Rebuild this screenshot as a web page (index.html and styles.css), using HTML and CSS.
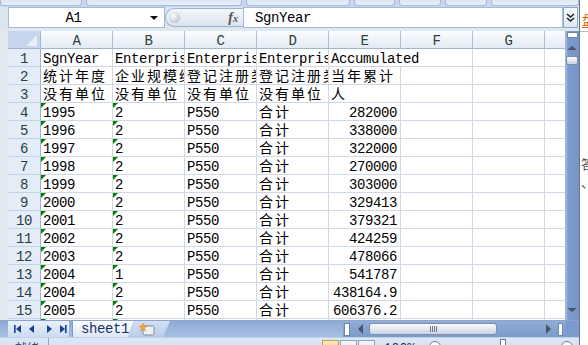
FILE: index.html
```html
<!DOCTYPE html>
<html>
<head>
<meta charset="utf-8">
<link rel="stylesheet" href="styles.css">
</head>
<body>
<div class="app">
  <div class="excel">
    <div class="ribbon">
      <div class="rgroup w82"></div>
      <div class="rgroup w157"></div>
      <div class="rgroup w105"></div>
      <div class="rgroup w41"></div>
      <div class="rgroup w42"></div>
      <div class="rgroup w42"></div>
      <div class="rgroup w88"></div>
    </div>
    <div class="fbar">
      <div class="namebox"><span class="nbtext">A1</span><span class="nbarrow"></span></div>
      <div class="fxpill"><span class="knob"></span><span class="fx">f<small>x</small></span></div>
      <div class="finput">SgnYear</div>
      <div class="expand"><svg width="9" height="10" viewBox="0 0 9 10"><path d="M1 1 L4.5 4 L8 1 M1 5 L4.5 8 L8 5" fill="none" stroke="#222" stroke-width="1.6"/></svg></div>
    </div>
    <div class="fgap"></div>
    <div class="sheet">
      <div class="grid">
        <div class="corner"></div><div class="ch">A</div><div class="ch">B</div><div class="ch">C</div><div class="ch">D</div><div class="ch">E</div><div class="ch">F</div><div class="ch">G</div><div class="ch"></div>

        <div class="rh">1</div><div class="c">SgnYear</div><div class="c">EnterpriseScale</div><div class="c">EnterpriseRegType</div><div class="c">EnterpriseRegType</div><div class="c span2">Accumulated</div><div class="c"></div><div class="c"></div>

        <div class="rh">2</div><div class="c k">统计年度</div><div class="c k">企业规模维度</div><div class="c k">登记注册类型</div><div class="c k">登记注册类型</div><div class="c k">当年累计</div><div class="c"></div><div class="c"></div><div class="c"></div>

        <div class="rh">3</div><div class="c k">没有单位</div><div class="c k">没有单位</div><div class="c k">没有单位</div><div class="c k">没有单位</div><div class="c k">人</div><div class="c"></div><div class="c"></div><div class="c"></div>

        <div class="rh">4</div><div class="c t">1995</div><div class="c t">2</div><div class="c">P550</div><div class="c k">合计</div><div class="c n">282000</div><div class="c"></div><div class="c"></div><div class="c"></div>
        <div class="rh">5</div><div class="c t">1996</div><div class="c t">2</div><div class="c">P550</div><div class="c k">合计</div><div class="c n">338000</div><div class="c"></div><div class="c"></div><div class="c"></div>
        <div class="rh">6</div><div class="c t">1997</div><div class="c t">2</div><div class="c">P550</div><div class="c k">合计</div><div class="c n">322000</div><div class="c"></div><div class="c"></div><div class="c"></div>
        <div class="rh">7</div><div class="c t">1998</div><div class="c t">2</div><div class="c">P550</div><div class="c k">合计</div><div class="c n">270000</div><div class="c"></div><div class="c"></div><div class="c"></div>
        <div class="rh">8</div><div class="c t">1999</div><div class="c t">2</div><div class="c">P550</div><div class="c k">合计</div><div class="c n">303000</div><div class="c"></div><div class="c"></div><div class="c"></div>
        <div class="rh">9</div><div class="c t">2000</div><div class="c t">2</div><div class="c">P550</div><div class="c k">合计</div><div class="c n">329413</div><div class="c"></div><div class="c"></div><div class="c"></div>
        <div class="rh">10</div><div class="c t">2001</div><div class="c t">2</div><div class="c">P550</div><div class="c k">合计</div><div class="c n">379321</div><div class="c"></div><div class="c"></div><div class="c"></div>
        <div class="rh">11</div><div class="c t">2002</div><div class="c t">2</div><div class="c">P550</div><div class="c k">合计</div><div class="c n">424259</div><div class="c"></div><div class="c"></div><div class="c"></div>
        <div class="rh">12</div><div class="c t">2003</div><div class="c t">2</div><div class="c">P550</div><div class="c k">合计</div><div class="c n">478066</div><div class="c"></div><div class="c"></div><div class="c"></div>
        <div class="rh">13</div><div class="c t">2004</div><div class="c t">1</div><div class="c">P550</div><div class="c k">合计</div><div class="c n">541787</div><div class="c"></div><div class="c"></div><div class="c"></div>
        <div class="rh">14</div><div class="c t">2004</div><div class="c t">2</div><div class="c">P550</div><div class="c k">合计</div><div class="c n">438164.9</div><div class="c"></div><div class="c"></div><div class="c"></div>
        <div class="rh">15</div><div class="c t">2005</div><div class="c t">2</div><div class="c">P550</div><div class="c k">合计</div><div class="c n">606376.2</div><div class="c"></div><div class="c"></div><div class="c"></div>
        <div class="rh">16</div><div class="c t"></div><div class="c t"></div><div class="c"></div><div class="c"></div><div class="c"></div><div class="c"></div><div class="c"></div><div class="c"></div>
      </div>
      <div class="vscroll">
        <div class="splitv"></div>
        <div class="arrow-up"></div>
        <div class="vthumb"></div>
        <div class="vfill"></div>
        <div class="arrow-down"></div>
      </div>
    </div>
    <div class="tabbar">
      <div class="nav">
        <svg width="56" height="12" viewBox="0 0 56 12">
          <g fill="#15428b">
            <rect x="3" y="2" width="1.6" height="8"/><path d="M5 6 L10 2 L10 10 Z"/>
            <path d="M18 6 L23 2 L23 10 Z"/>
            <path d="M36 2 L41 6 L36 10 Z"/>
            <path d="M49 2 L54 6 L49 10 Z"/><rect x="54" y="2" width="1.6" height="8"/>
          </g>
        </svg>
      </div>
      <div class="tab">sheet1</div>
      <div class="newtab">
        <svg width="18" height="14" viewBox="0 0 18 14">
          <rect x="5" y="4" width="11" height="9" rx="1.5" fill="#eef2f7" stroke="#7a8799"/>
          <path d="M5 1 L6 4 L9 4 L6.5 6 L7.5 9 L5 7 L2.5 9 L3.5 6 L1 4 L4 4 Z" fill="#f5a623" stroke="#d9822b" stroke-width="0.5"/>
        </svg>
      </div>
      <div class="tabfill"></div>
      <div class="hscroll">
        <div class="splith"></div>
        <div class="arrow-left"></div>
        <div class="hthumb"><span class="grip"></span></div>
        <div class="hfill"></div>
        <div class="arrow-right"></div>
        <div class="splith2"></div>
      </div>
      <div class="sbcorner"></div>
    </div>
    <div class="status">
      <div class="ready">就绪</div>
      <div class="sep"></div>
      <div class="stfill"></div>
      <div class="views"><span class="vb on"></span><span class="vb"></span><span class="vb"></span></div>
      <div class="zoomtxt">100%</div>
      <div class="zbtn"></div>
      <div class="ztrack"><span class="zmark"></span></div>
      <div class="zbtn"></div>
    </div>
  </div>
  <div class="edge"></div>
  <div class="side">
    <div class="sidetop">盘</div>
    <div class="sideline"></div>
    <div class="sidetext">答</div>
    <div class="sidetext s2">、</div>
  </div>
</div>
</body>
</html>
```

FILE: styles.css
```css
html, body {
  margin: 0;
  padding: 0;
  width: 588px;
  height: 345px;
  overflow: hidden;
  background: #dfe6ef;
}

.app {
  display: flex;
  height: 345px;
  overflow: hidden;
}

.excel {
  width: 579px;
  flex: none;
  display: flex;
  flex-direction: column;
  background: #dfe7f1;
  overflow: hidden;
}

.excel > * {
  flex: none;
}

.edge {
  width: 1px;
  flex: none;
  background: #6c7480;
}

.side {
  width: 8px;
  flex: none;
  background: #ffffff;
  overflow: hidden;
  font-family: "Noto Sans CJK SC", sans-serif;
}

.sidetop {
  margin: 11px 0 0 2px;
  font-size: 14px;
  line-height: 16px;
  color: #e0620d;
  border-bottom: 1px solid #e0620d;
  width: 20px;
  white-space: nowrap;
}

.sideline {
  margin-top: 3px;
  height: 1px;
  background: #b8b8b8;
}

.sidetext {
  margin: 124px 0 0 1px;
  width: 20px;
  font-size: 13px;
  line-height: 16px;
  color: #444;
  white-space: nowrap;
}

.sidetext.s2 {
  margin-top: 2px;
}

/* ribbon remains */
.ribbon {
  height: 7px;
  display: flex;
  gap: 4px;
  background: #c6d7ee;
  overflow: hidden;
}

.rgroup {
  height: 5px;
  background: linear-gradient(#dbe7f6, #e9f0fa);
  border: 1px solid #a5bbd8;
  border-top: none;
  border-radius: 0 0 4px 4px;
}

.w82 { width: 80px; }
.w157 { width: 154px; }
.w105 { width: 102px; }
.w41 { width: 39px; }
.w42 { width: 40px; }
.w88 { width: 86px; }

/* formula bar */
.fbar {
  height: 21px;
  display: flex;
  padding-left: 8px;
  background: #dbe5f2;
  font-family: "Liberation Mono", monospace;
  font-size: 14px;
  letter-spacing: -0.4px;
}

.namebox {
  width: 157px;
  box-sizing: border-box;
  background: #fff;
  border: 1px solid #a7bad4;
  display: flex;
  align-items: center;
}

.nbtext {
  flex: 1;
  text-align: center;
  padding-right: 12px;
  line-height: 19px;
  padding-top: 1px;
}

.nbarrow {
  width: 0;
  height: 0;
  border-left: 4px solid transparent;
  border-right: 4px solid transparent;
  border-top: 4px solid #111;
  margin-right: 6px;
}

.fxpill {
  width: 78px;
  box-sizing: border-box;
  margin: 1px 0;
  display: flex;
  align-items: center;
  justify-content: space-between;
  background: linear-gradient(#f4f7fb, #dbe3ef);
  border: 1px solid #9fb2cc;
  border-right: none;
  border-radius: 10px 0 0 10px;
  padding: 0 5px 0 3px;
}

.knob {
  width: 11px;
  height: 11px;
  border-radius: 50%;
  background: radial-gradient(circle at 40% 35%, #ffffff, #c3c9d2 70%, #9aa3ae);
}

.fx {
  font-family: "Liberation Serif", serif;
  font-style: italic;
  font-weight: bold;
  font-size: 14px;
  color: #555;
  letter-spacing: 0;
}

.fx small {
  font-size: 10px;
}

.finput {
  width: 320px;
  box-sizing: border-box;
  background: #fff;
  border: 1px solid #a7bad4;
  padding: 1px 0 0 11px;
  line-height: 19px;
  color: #000;
}

.expand {
  width: 15px;
  box-sizing: border-box;
  background: linear-gradient(#f8fbff, #dde7f4);
  border: 1px solid #8ea8cc;
  display: flex;
  align-items: center;
  justify-content: center;
}

.fgap {
  height: 3px;
  background: #dfe7f1;
}

/* sheet */
.sheet {
  height: 289px;
  display: flex;
  padding-left: 8px;
  background: #e3e9f1;
}

.grid {
  width: 557px;
  height: 289px;
  overflow: hidden;
  display: grid;
  grid-template-columns: 33px repeat(7, 72px) 21px;
  grid-auto-rows: 18px;
  background: #fff;
  font-family: "Liberation Mono", monospace;
  font-size: 14px;
  letter-spacing: -0.4px;
}

.corner {
  position: relative;
  background: #c5d6ec;
  border-right: 1px solid #9eb6ce;
  border-bottom: 1px solid #9eb6ce;
}

.corner::after {
  content: "";
  position: absolute;
  right: 3px;
  bottom: 2px;
  width: 0;
  height: 0;
  border-left: 11px solid transparent;
  border-bottom: 11px solid #e8eef6;
}

.ch {
  box-sizing: border-box;
  background: linear-gradient(#fbfcfe, #e3eaf4);
  border-right: 1px solid #a9bfd6;
  border-bottom: 1px solid #9eb6ce;
  text-align: center;
  color: #27413e;
  line-height: 18px;
  padding-top: 1px;
}

.rh {
  box-sizing: border-box;
  background: #e4ecf7;
  border-right: 1px solid #9eb6ce;
  border-bottom: 1px solid #c5d3e6;
  text-align: center;
  color: #27413e;
  line-height: 20px;
  overflow: hidden;
}

.c {
  box-sizing: border-box;
  position: relative;
  border-right: 1px solid #d0d7e5;
  border-bottom: 1px solid #d0d7e5;
  padding: 0 2px;
  overflow: hidden;
  white-space: nowrap;
  line-height: 20px;
  color: #000;
}

.c.span2 {
  grid-column: span 2;
}

.c.k {
  font-family: "Noto Sans CJK SC", sans-serif;
  font-size: 14px;
  letter-spacing: 2px;
  line-height: 16px;
}

.c.n {
  text-align: right;
  padding-right: 3px;
}

.c.t::before {
  content: "";
  position: absolute;
  left: 0;
  top: 0;
  width: 0;
  height: 0;
  border-top: 5px solid #008000;
  border-right: 5px solid transparent;
}

/* vertical scrollbar */
.vscroll {
  width: 14px;
  display: flex;
  flex-direction: column;
  align-items: center;
  background: linear-gradient(to right, #a6bee0, #7b9bcc 25%, #7596c8);
}

.splitv {
  margin-top: 1px;
  width: 11px;
  height: 6px;
  box-sizing: border-box;
  border: 1px solid #6c85a8;
  border-radius: 1px;
  background: linear-gradient(#ffffff 40%, #5b6f8c 45%, #5b6f8c 55%, #ffffff 60%);
}

.arrow-up {
  margin-top: 8px;
  width: 0;
  height: 0;
  border-left: 5px solid transparent;
  border-right: 5px solid transparent;
  border-bottom: 4px solid #4b5563;
}

.vthumb {
  margin-top: 6px;
  width: 12px;
  height: 9px;
  box-sizing: border-box;
  border: 1px solid #7d8ea6;
  border-radius: 2px;
  background: linear-gradient(#fbfcfe, #c8d3e2);
}

.vfill {
  flex: 1;
}

.arrow-down {
  margin-bottom: 8px;
  width: 0;
  height: 0;
  border-left: 5px solid transparent;
  border-right: 5px solid transparent;
  border-top: 4px solid #4b5563;
}

/* tab bar */
.tabbar {
  height: 17px;
  display: flex;
  padding-left: 8px;
  background: linear-gradient(#8faad3, #a7bfe2);
  border-top: 1px solid #8aa5cf;
  box-sizing: border-box;
}

.nav {
  width: 62px;
  box-sizing: border-box;
  background: linear-gradient(#e9f0fa, #cddcf1);
  border-right: 1px solid #98b1d6;
  display: flex;
  align-items: center;
  padding-left: 3px;
}

.tab {
  width: 62px;
  margin-left: 2px;
  padding-left: 8px;
  box-sizing: border-box;
  background: linear-gradient(#ffffff, #dde7f5);
  clip-path: polygon(0 0, 100% 0, 90% 100%, 0 100%);
  font-family: "Liberation Mono", monospace;
  font-size: 14px;
  letter-spacing: -0.4px;
  line-height: 16px;
  color: #15306b;
  border-left: 1px solid #7f9cc7;
  white-space: nowrap;
  overflow: hidden;
}

.newtab {
  width: 42px;
  margin-left: -6px;
  background: linear-gradient(#d4e1f3, #b9cdea);
  clip-path: polygon(16% 0, 100% 0, 84% 100%, 0 100%);
  display: flex;
  align-items: center;
  padding-left: 10px;
  box-sizing: border-box;
}

.tabfill {
  flex: 1;
}

.hscroll {
  width: 222px;
  display: flex;
  align-items: center;
  background: linear-gradient(#90acd6, #7b9bcc);
}

.splith {
  width: 4px;
  height: 11px;
  background: #fff;
  border: 1px solid #6d87ad;
  margin-left: 1px;
}

.arrow-left {
  margin-left: 8px;
  width: 0;
  height: 0;
  border-top: 5px solid transparent;
  border-bottom: 5px solid transparent;
  border-right: 5px solid #4b5563;
}

.hthumb {
  margin-left: 6px;
  width: 128px;
  height: 12px;
  box-sizing: border-box;
  border: 1px solid #8190a6;
  border-radius: 3px;
  background: linear-gradient(#fbfcfe, #c9d3e1);
  display: flex;
  align-items: center;
  justify-content: center;
}

.grip {
  width: 7px;
  height: 6px;
  background: repeating-linear-gradient(to right, #6c7a8e 0 1px, transparent 1px 2px);
}

.hfill {
  flex: 1;
}

.arrow-right {
  width: 0;
  height: 0;
  border-top: 5px solid transparent;
  border-bottom: 5px solid transparent;
  border-left: 5px solid #4b5563;
  margin-right: 7px;
}

.splith2 {
  width: 3px;
  height: 11px;
  background: #fff;
  border: 1px solid #6d87ad;
  margin-right: 2px;
}

.sbcorner {
  width: 14px;
  background: #7b9bcc;
}

/* status bar */
.status {
  height: 24px;
  display: flex;
  align-items: flex-start;
  padding-left: 8px;
  background: linear-gradient(#dde8f6, #c6d7ee);
  border-top: 1px solid #c0d0e6;
}

.ready {
  font-family: "Noto Sans CJK SC", sans-serif;
  font-size: 12px;
  line-height: 14px;
  margin: 3px 0 0 7px;
  color: #15306b;
}

.sep {
  width: 1px;
  height: 20px;
  background: #8ea8cc;
  margin-left: 9px;
}

.stfill {
  flex: 1;
}

.views {
  display: flex;
  gap: 1px;
  margin-top: 2px;
}

.vb {
  width: 17px;
  height: 14px;
  box-sizing: border-box;
  border: 1px solid #8ea2bd;
  background: linear-gradient(#f5f8fc, #d6e0ee);
}

.vb.on {
  background: linear-gradient(#fde9b9, #f8c767);
  border-color: #c2a05a;
}

.zoomtxt {
  font-family: "Liberation Mono", monospace;
  font-size: 13px;
  line-height: 14px;
  margin: 4px 0 0 9px;
  color: #15306b;
}

.zbtn {
  width: 10px;
  height: 10px;
  border-radius: 50%;
  border: 1px solid #6a7d98;
  background: #fff;
  margin: 3px 6px 0 14px;
}

.ztrack {
  width: 100px;
  height: 1px;
  margin-top: 8px;
  background: #7f93b0;
  position: relative;
}

.zmark {
  position: absolute;
  left: 53px;
  top: -7px;
  width: 4px;
  height: 10px;
  background: #fff;
  border: 1px solid #6a7d98;
}
```
